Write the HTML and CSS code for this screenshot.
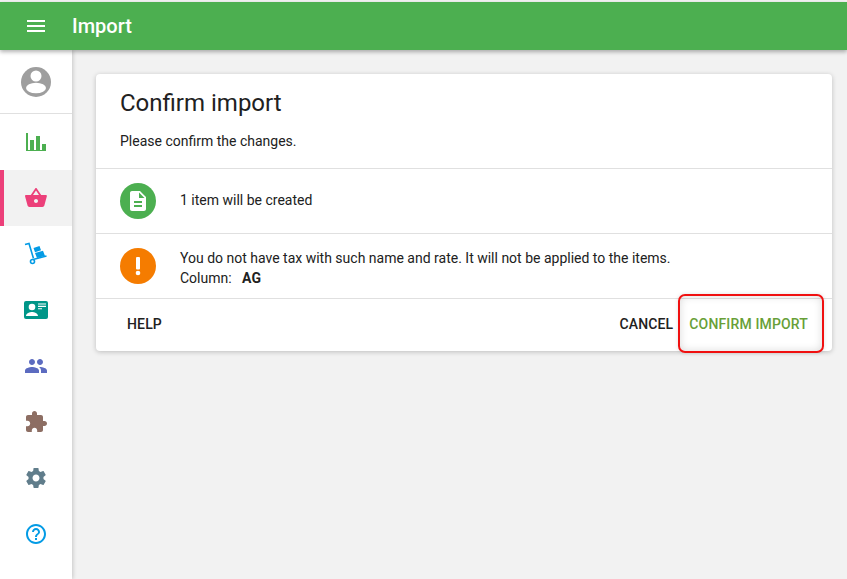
FILE: index.html
```html
<!DOCTYPE html>
<html lang="en">
<head>
<meta charset="utf-8">
<title>Import</title>
<link rel="stylesheet" href="styles.css">
</head>
<body>
<div class="app">
  <header class="topbar">
    <svg class="menu-icon" viewBox="0 0 24 24" width="24" height="24"><path fill="#fff" d="M3 18h18v-2H3v2zm0-5h18v-2H3v2zm0-7v2h18V6H3z"/></svg>
    <h1 class="topbar-title">Import</h1>
  </header>
  <div class="body">
    <nav class="sidebar">
      <div class="avatar">
        <svg viewBox="0 0 30 30" width="30" height="30"><circle cx="15" cy="15" r="15" fill="#9e9e9e"/><circle cx="15" cy="9" r="5.500" fill="#fff"/><ellipse cx="15" cy="21" rx="10" ry="5.200" fill="#fff"/></svg>
      </div>
      <a class="nav-item">
        <svg viewBox="0 0 24 24" width="24" height="24"><path fill="#4caf50" d="M2 3h2v18H2zM6 10h4v11H6zM12 6h4v15h-4zM18 14h4v7h-4zM2 20h20v1H2z"/></svg>
      </a>
      <a class="nav-item active">
        <svg viewBox="0 0 24 24" width="24" height="24"><path fill="#ec407a" d="M17.200 9l-4.400-6.600c-.2-.3-.5-.4-.8-.4s-.6.1-.8.4L6.800 9H2c-.5 0-1 .5-1 1l.04.3 2.500 9.300c.2.800 1 1.400 1.900 1.400h13c.9 0 1.700-.6 1.900-1.400l2.500-9.300.06-.3c0-.5-.5-1-1-1h-4.700zM9 9l3-4.400L15 9H9zm3 8c-1.100 0-2-.9-2-2s.9-2 2-2 2 .9 2 2-.9 2-2 2z"/></svg>
      </a>
      <a class="nav-item">
        <svg viewBox="0 0 24 24" width="24" height="24"><g fill="none" stroke="#039be5" stroke-width="1.600"><path d="M1 2.500l4-1 4.500 15"/><path d="M10 17.300l12.500-3.300"/><circle cx="8.500" cy="19.500" r="2"/></g><path fill="#039be5" d="M9.500 6l6-2 1.500 4.200-6 2zM11 11l8-2.300 2 5.300-8 2z"/></svg>
      </a>
      <a class="nav-item">
        <svg viewBox="0 0 24 24" width="24" height="24"><rect x="0" y="3" width="24" height="18" rx="2" fill="#009688"/><g fill="#fff"><circle cx="8" cy="9" r="3.300"/><path d="M2 18c0-2.700 3.800-4 6-4s6 1.300 6 4zM14 5.500h8v1.100h-8zM14 7.800h8v1.100h-8zM14 10.200h4v1.100h-4z"/></g></svg>
      </a>
      <a class="nav-item">
        <svg viewBox="0 0 24 24" width="24" height="24"><path fill="#5c6bc0" d="M16 11c1.660 0 2.990-1.340 2.990-3S17.660 5 16 5s-3 1.340-3 3 1.340 3 3 3zm-8 0c1.660 0 2.990-1.340 2.990-3S9.660 5 8 5 5 6.340 5 8s1.340 3 3 3zm0 2c-2.330 0-7 1.170-7 3.500V19h14v-2.500c0-2.330-4.670-3.500-7-3.500zm8 0c-.29 0-.62.02-.97.050 1.160.84 1.970 1.970 1.970 3.450V19h6v-2.500c0-2.330-4.670-3.500-7-3.500z"/></svg>
      </a>
      <a class="nav-item">
        <svg viewBox="0 0 24 24" width="24" height="24"><path fill="#8d6e63" d="M20.500 11H19V7c0-1.100-.9-2-2-2h-4V3.500C13 2.120 11.880 1 10.500 1S8 2.120 8 3.500V5H4c-1.100 0-1.990.9-1.990 2v3.800H3.500c1.490 0 2.700 1.210 2.700 2.700s-1.210 2.700-2.700 2.700H2V20c0 1.100.9 2 2 2h3.800v-1.500c0-1.490 1.210-2.700 2.700-2.700 1.490 0 2.700 1.210 2.700 2.700V22H17c1.100 0 2-.9 2-2v-4h1.500c1.380 0 2.500-1.120 2.500-2.500S21.880 11 20.500 11z"/></svg>
      </a>
      <a class="nav-item">
        <svg viewBox="0 0 24 24" width="24" height="24"><path fill="#607d8b" d="M19.430 12.980c.04-.32.070-.64.070-.98s-.03-.66-.07-.98l2.110-1.650c.19-.15.240-.42.120-.64l-2-3.460c-.12-.22-.39-.3-.61-.22l-2.490 1c-.52-.4-1.080-.73-1.690-.98l-.38-2.650C14.460 2.180 14.250 2 14 2h-4c-.25 0-.46.18-.49.42l-.38 2.650c-.61.25-1.170.59-1.690.98l-2.490-1c-.23-.09-.49 0-.61.22l-2 3.460c-.13.22-.07.49.12.64l2.110 1.650c-.04.32-.07.65-.07.98s.03.66.07.98l-2.110 1.650c-.19.15-.24.42-.12.64l2 3.460c.12.22.39.3.61.22l2.490-1c.52.4 1.080.73 1.690.98l.38 2.650c.03.24.24.42.49.42h4c.25 0 .46-.18.49-.42l.38-2.650c.61-.25 1.170-.59 1.690-.98l2.490 1c.23.09.49 0 .61-.22l2-3.460c.12-.22.07-.49-.12-.64l-2.110-1.650zM12 15.500c-1.930 0-3.500-1.570-3.500-3.500s1.570-3.500 3.500-3.500 3.500 1.570 3.500 3.500-1.570 3.500-3.500 3.500z"/></svg>
      </a>
      <a class="nav-item">
        <svg viewBox="0 0 24 24" width="24" height="24"><path fill="#039be5" d="M11 18h2v-2h-2v2zm1-16C6.480 2 2 6.480 2 12s4.480 10 10 10 10-4.480 10-10S17.520 2 12 2zm0 18c-4.410 0-8-3.590-8-8s3.590-8 8-8 8 3.590 8 8-3.590 8-8 8zm0-14c-2.210 0-4 1.790-4 4h2c0-1.100.9-2 2-2s2 .9 2 2c0 2-3 1.750-3 5h2c0-2.250 3-2.500 3-5 0-2.210-1.790-4-4-4z"/></svg>
      </a>
    </nav>
    <main class="content">
      <section class="card">
        <div class="card-head">
          <h2 class="card-title">Confirm import</h2>
          <p class="card-sub">Please confirm the changes.</p>
        </div>
        <div class="row">
          <span class="badge badge-green">
            <svg viewBox="0 0 24 24" width="24" height="24"><path fill="#fff" d="M14 2H6c-1.100 0-1.990.9-1.990 2L4 20c0 1.100.89 2 1.990 2H18c1.100 0 2-.9 2-2V8l-6-6zm2 16H8v-2h8v2zm0-4H8v-2h8v2zm-3-5V3.500L18.500 9H13z"/></svg>
          </span>
          <div class="row-text row-text-single">1 item will be created</div>
        </div>
        <div class="row">
          <span class="badge badge-orange">
            <svg viewBox="0 0 24 24" width="24" height="24"><g fill="#fff"><rect x="10" y="3" width="4" height="12.500" rx="1"/><circle cx="12" cy="19" r="2.300"/></g></svg>
          </span>
          <div class="row-text row-text-double">
            <div>You do not have tax with such name and rate. It will not be applied to the items.</div>
            <div>Column: <b class="col-name">AG</b></div>
          </div>
        </div>
        <div class="actions">
          <button class="btn">HELP</button>
          <span class="spacer"></span>
          <button class="btn">CANCEL</button>
          <button class="btn btn-primary">CONFIRM IMPORT</button>
        </div>
      </section>
      <div class="highlight"></div>
    </main>
  </div>
</div>
</body>
</html>
```
FILE: styles.css
```css
* { box-sizing: border-box; }
html, body { margin: 0; height: 100%; }
body {
  font-family: Roboto, "Liberation Sans", sans-serif;
  color: #212121;
  background: #f2f2f2;
  overflow: hidden;
}
.app { height: 579px; display: flex; flex-direction: column; padding-top: 2px; background: #f2f2f2; }
.topbar {
  height: 48px;
  flex: none;
  display: flex;
  align-items: center;
  padding-left: 24px;
  background: #4caf50;
  color: #fff;
  box-shadow: 0 2px 4px rgba(0,0,0,.3);
  position: relative;
  z-index: 2;
}
.menu-icon { flex: none; }
.topbar-title { margin: 0 0 0 24px; font-size: 20px; font-weight: 500; }
.body { flex: 1; display: flex; min-height: 0; }
.sidebar {
  width: 72px;
  flex: none;
  background: #fff;
  box-shadow: 1px 0 4px rgba(0,0,0,.18);
  display: flex;
  flex-direction: column;
  position: relative;
  z-index: 1;
}
.avatar {
  height: 64px;
  flex: none;
  display: flex;
  align-items: center;
  justify-content: center;
  border-bottom: 1px solid #e0e0e0;
}
.nav-item {
  height: 56px;
  flex: none;
  display: flex;
  align-items: center;
  justify-content: center;
}
.nav-item.active { background: #f2f2f2; box-shadow: inset 4px 0 0 #ec407a; }
.content { flex: 1; padding: 24px 15px 0 24px; position: relative; }
.card {
  background: #fff;
  border-radius: 4px;
  box-shadow: 0 1px 5px rgba(0,0,0,.22);
  height: 277px;
  display: flex;
  flex-direction: column;
}
.card-head { height: 94px; flex: none; padding: 16px 24px 0; }
.card-title { margin: 0; font-size: 24px; font-weight: 400; line-height: 26px; }
.card-sub { margin: 15px 0 0; font-size: 14px; line-height: 20px; }
.row {
  height: 65px;
  flex: none;
  display: flex;
  align-items: center;
  padding-left: 24px;
  border-top: 1px solid #e0e0e0;
  font-size: 14px;
  line-height: 20px;
}
.row-text-single { padding-bottom: 2px; }
.row-text-double { padding-top: 4px; }
.badge {
  width: 36px;
  height: 36px;
  flex: none;
  border-radius: 50%;
  display: flex;
  align-items: center;
  justify-content: center;
  margin-right: 24px;
}
.badge-green { background: #4caf50; }
.badge-orange { background: #f57c00; }
.col-name { margin-left: 7px; font-weight: 700; }
.actions {
  flex: 1;
  display: flex;
  align-items: center;
  padding: 0 16px 2px 24px;
  border-top: 1px solid #e0e0e0;
}
.spacer { flex: 1; }
.btn {
  border: 0;
  background: none;
  padding: 0 7px;
  height: 36px;
  font: 500 14px Roboto, "Liberation Sans", sans-serif;
  letter-spacing: .15px;
  color: #212121;
}
.btn-primary { color: #689f38; margin-left: 1px; padding: 0 8px; }
.highlight {
  position: absolute;
  left: 606px;
  top: 244px;
  width: 146px;
  height: 59px;
  border: 2px solid #f01010;
  border-radius: 7px;
  box-shadow: inset 0 0 8px rgba(0,0,0,.15), 0 0 4px rgba(0,0,0,.12);
  z-index: 3;
}
```
